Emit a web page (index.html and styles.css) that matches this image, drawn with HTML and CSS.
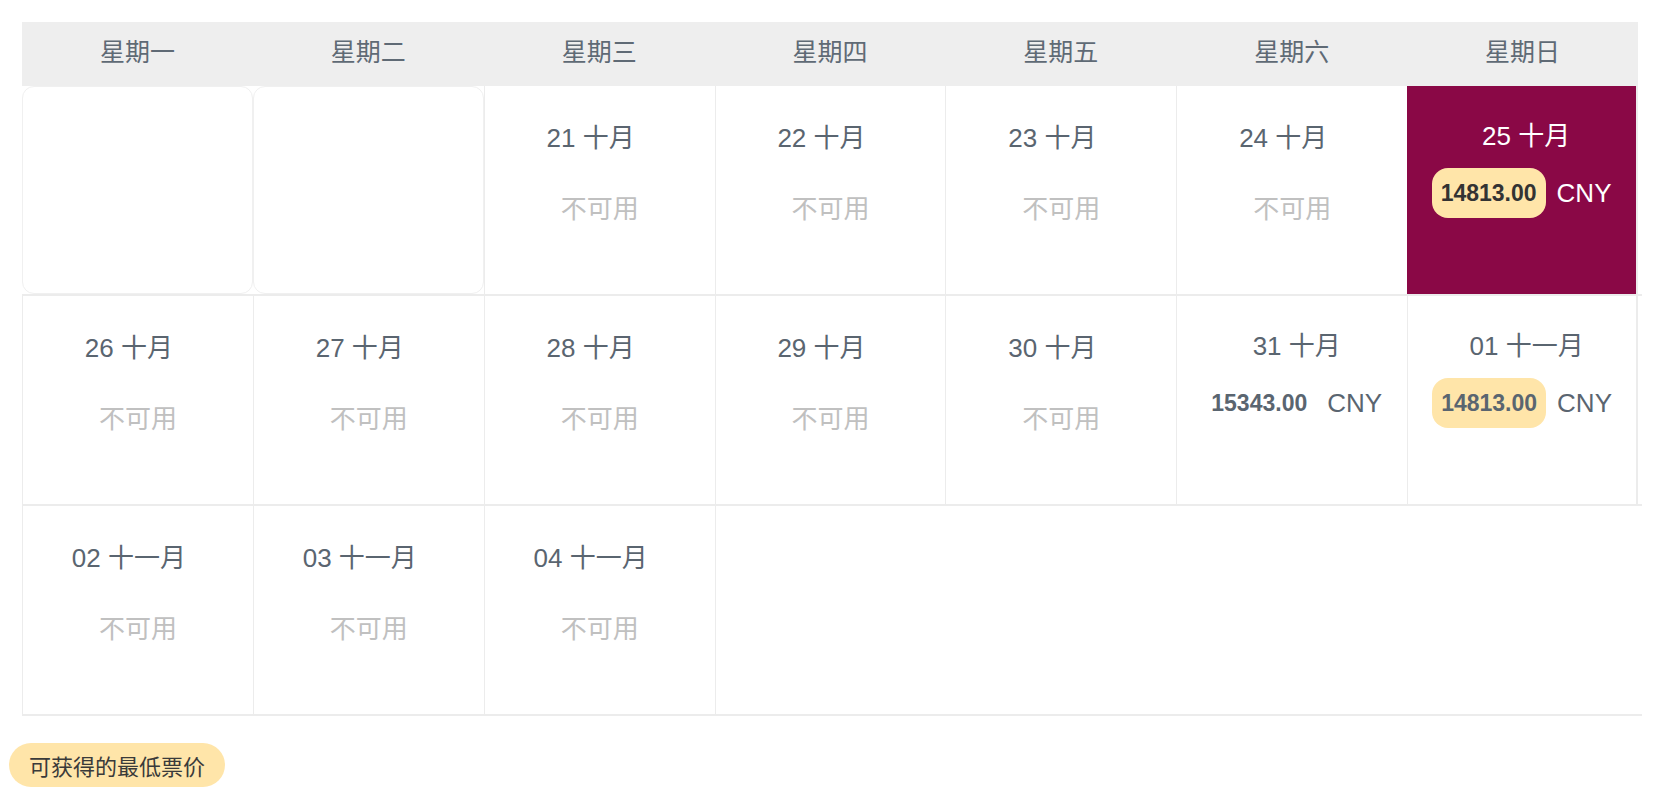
FILE: index.html
```html
<!DOCTYPE html>
<html lang="zh-CN">
  <head>
    <meta charset="UTF-8" />
    <meta name="viewport" content="width=device-width, initial-scale=1.0" />
    <title>低价日历</title>
    <link rel="stylesheet" href="styles.css">
  </head>
  <body>
    <div class="calendar">
      <div class="week-head">
        <div>星期一</div>
        <div>星期二</div>
        <div>星期三</div>
        <div>星期四</div>
        <div>星期五</div>
        <div>星期六</div>
        <div>星期日</div>
      </div>

      <div class="week-row">
        <div class="day blank"></div>
        <div class="day blank"></div>
        <div class="day"><div class="date">21 十月</div><div class="na">不可用</div></div>
        <div class="day"><div class="date">22 十月</div><div class="na">不可用</div></div>
        <div class="day"><div class="date">23 十月</div><div class="na">不可用</div></div>
        <div class="day"><div class="date">24 十月</div><div class="na">不可用</div></div>
        <div class="day priced selected">
          <div class="date">25 十月</div>
          <div class="price"><span class="amount lowest">14813.00</span><span class="currency">CNY</span></div>
        </div>
      </div>

      <div class="week-row">
        <div class="day"><div class="date">26 十月</div><div class="na">不可用</div></div>
        <div class="day"><div class="date">27 十月</div><div class="na">不可用</div></div>
        <div class="day"><div class="date">28 十月</div><div class="na">不可用</div></div>
        <div class="day"><div class="date">29 十月</div><div class="na">不可用</div></div>
        <div class="day"><div class="date">30 十月</div><div class="na">不可用</div></div>
        <div class="day priced">
          <div class="date">31 十月</div>
          <div class="price"><span class="amount">15343.00</span><span class="currency">CNY</span></div>
        </div>
        <div class="day priced">
          <div class="date">01 十一月</div>
          <div class="price"><span class="amount lowest">14813.00</span><span class="currency">CNY</span></div>
        </div>
      </div>

      <div class="week-row last">
        <div class="day"><div class="date">02 十一月</div><div class="na">不可用</div></div>
        <div class="day"><div class="date">03 十一月</div><div class="na">不可用</div></div>
        <div class="day"><div class="date">04 十一月</div><div class="na">不可用</div></div>
        <div class="day filler"></div>
      </div>
    </div>

    <div class="legend">可获得的最低票价</div>
  </body>
</html>
```

FILE: styles.css
```css
/* Page */
body {
  margin: 0;
  background: #fff;
  font-family: "Liberation Sans", Arial, "Noto Sans CJK SC", sans-serif;
  color: #5a6570;
}

/* Calendar */
.calendar {
  width: 1616px;
  margin: 22px 0 0 22px;
}

.week-head {
  display: grid;
  grid-template-columns: repeat(7, 1fr);
  height: 64px;
  background: #eeeeee;
  color: #5f6a75;
  font-size: 25px;
}

.week-head div {
  display: flex;
  align-items: center;
  justify-content: center;
  padding-bottom: 8px;
}

.week-row {
  display: grid;
  grid-template-columns: repeat(7, 1fr);
  width: 1620px;
  padding-right: 4px;
  box-sizing: border-box;
  height: 210px;
  border-top: 2px solid #ececec;
}

.week-row:nth-child(2) {
  height: 208px;
  border-top: none;
}

.week-row.last {
  height: 212px;
  border-bottom: 2px solid #ececec;
}

/* Day cells */
.day {
  border-left: 1px solid #ececec;
  padding-top: 36px;
  text-align: center;
  font-size: 26px;
}

.day:nth-child(7) {
  border-right: 2px solid #ececec;
}

.day.blank {
  border: 1px solid #f0f0f0;
  border-radius: 12px;
}

.day.filler {
  grid-column: span 4;
}

.date {
  line-height: 32px;
  padding-right: 18px;
}

.na {
  margin-top: 39px;
  line-height: 32px;
  color: #c0c0c0;
}

/* Priced days */
.day.priced {
  padding-top: 34px;
}

.day.priced .date {
  padding-right: 0;
  padding-left: 9px;
}

.price {
  display: flex;
  justify-content: center;
  align-items: center;
  margin-top: 16px;
}

.amount {
  padding: 0 9px;
  line-height: 50px;
  border-radius: 16px;
  font-weight: bold;
  font-size: 23px;
}

.amount.lowest {
  background: #ffe5a9;
}

.currency {
  margin-left: 11px;
}

.day.selected {
  background: #8a0846;
  color: #fff;
  border-left: none;
}

.day.selected .amount {
  color: #333;
}

/* Legend */
.legend {
  display: inline-block;
  margin: 27px 0 0 9px;
  padding: 0 20px;
  height: 44px;
  line-height: 44px;
  border-radius: 22px;
  background: #ffe5a9;
  color: #3a3a3a;
  font-size: 22px;
  font-family: "Noto Sans CJK SC", sans-serif;
}
```
